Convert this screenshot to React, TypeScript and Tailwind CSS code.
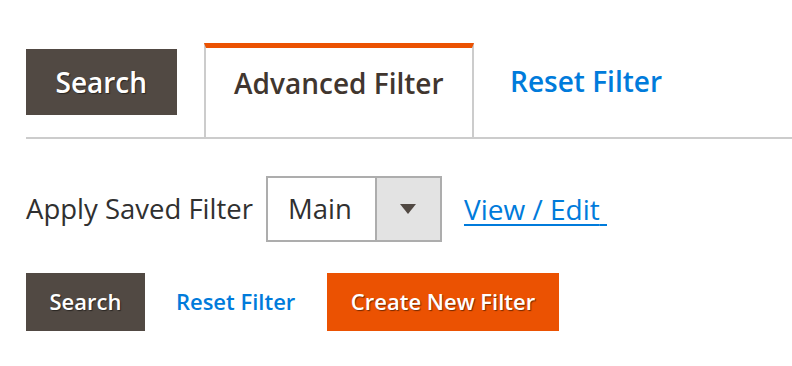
import React from "react";

export default function App() {
  return (
    <div
      className="w-[792px] h-[366px] bg-white pt-[43px] pl-[26px] overflow-hidden"
      style={{ fontFamily: '"Open Sans", "Noto Sans", sans-serif' }}
    >
      <div className="flex items-start border-b-2 border-[#cccccc]">
        <button className="mt-[6px] bg-[#514943] px-[29.5px] py-[14px] text-[28px] leading-[38px] font-semibold text-white [text-shadow:1px_1px_1px_rgba(0,0,0,0.5)]">
          Search
        </button>
        <div className="ml-[27px] h-[94px] border-t-[5px] border-t-[#eb5202] border-x-2 border-x-[#cccccc] px-[28.5px] pt-[16px] text-[28px] leading-[38px] font-semibold text-[#41362f]">
          Advanced Filter
        </div>
        <a className="ml-[36px] mt-[19px] text-[28px] leading-[38px] font-semibold text-[#007bdb]">
          Reset Filter
        </a>
      </div>

      <div className="mt-[37px] flex items-center">
        <span className="text-[27.5px] leading-[36px] text-[#303030]">Apply Saved Filter</span>
        <div className="ml-[13px] flex h-[66px] border-2 border-[#adadad]">
          <div className="flex w-[107px] items-center pl-[20px] text-[27.5px] text-[#303030]">Main</div>
          <div className="flex w-[65px] items-center justify-center border-l-2 border-[#adadad] bg-[#e3e3e3]">
            <div className="h-0 w-0 border-l-[8px] border-r-[8px] border-t-[10px] border-l-transparent border-r-transparent border-t-[#514943]" />
          </div>
        </div>
        <a className="ml-[22px] text-[28px] leading-[36px] text-[#007bdb] underline underline-offset-[4px]">
          View / Edit{"\u00a0"}
        </a>
      </div>

      <div className="mt-[31px] flex items-center">
        <button className="h-[58px] bg-[#514943] px-[23.5px] pb-[2px] text-[22px] font-semibold text-white [text-shadow:1px_1px_1px_rgba(0,0,0,0.5)]">
          Search
        </button>
        <a className="ml-[31px] pb-[2px] text-[22px] font-semibold text-[#007bdb]">Reset Filter</a>
        <button className="ml-[32px] h-[58px] bg-[#eb5202] px-[23.5px] pb-[2px] text-[22px] font-semibold text-white [text-shadow:1px_1px_1px_rgba(0,0,0,0.5)]">
          Create New Filter
        </button>
      </div>
    </div>
  );
}
